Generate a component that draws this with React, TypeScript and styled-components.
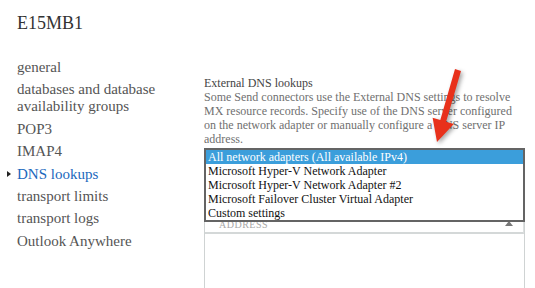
import React from "react";
import styled, { createGlobalStyle } from "styled-components";

const Global = createGlobalStyle`
  html, body { margin: 0; padding: 0; background: #fff; }
  body { font-family: "Liberation Serif", "Times New Roman", serif; }
`;

const Page = styled.div`
  position: relative;
  width: 535px;
  height: 288px;
  overflow: hidden;
  background: #fff;
`;

const Title = styled.h1`
  margin: 0;
  padding: 12px 0 0 17px;
  font-size: 18px;
  line-height: 22px;
  font-weight: normal;
  color: #333;
`;

const Body = styled.div`
  display: grid;
  grid-template-columns: 204px 1fr;
`;

const Nav = styled.ul`
  list-style: none;
  margin: 25px 0 0;
  padding: 0;
  display: flex;
  flex-direction: column;
  gap: 5.4px;
`;

const NavItem = styled.li<{ $active?: boolean }>`
  display: flex;
  font-size: 15px;
  line-height: 17px;
  color: ${(p) => (p.$active ? "#1a68bd" : "#555")};
`;

const NavLabel = styled.span`
  max-width: 150px;
`;

const Marker = styled.span<{ $show?: boolean }>`
  flex: 0 0 17px;
  display: flex;
  align-items: center;
  padding-left: 7px;
  box-sizing: border-box;
  &::before {
    content: "";
    display: ${(p) => (p.$show ? "block" : "none")};
    border-left: 4px solid #222;
    border-top: 3.5px solid transparent;
    border-bottom: 3.5px solid transparent;
  }
`;

const Panel = styled.div`
  margin-top: 42px;
  width: 321px;
  display: flex;
  flex-direction: column;
`;

const Heading = styled.div`
  font-size: 12px;
  line-height: 14px;
  color: #444;
`;

const Description = styled.p`
  margin: 0;
  font-size: 12px;
  line-height: 14px;
  color: #707070;
`;

const Field = styled.div`
  position: relative;
  margin-top: 2px;
  height: 62px;
`;

const Options = styled.ul`
  position: absolute;
  z-index: 2;
  left: 0;
  top: 0;
  width: 321px;
  box-sizing: border-box;
  margin: 0;
  padding: 0;
  list-style: none;
  background: #fff;
  border: 2px solid #646464;
`;

const Option = styled.li<{ $selected?: boolean }>`
  height: 14px;
  padding-left: 2px;
  font-size: 12px;
  line-height: 14px;
  white-space: nowrap;
  color: ${(p) => (p.$selected ? "#fff" : "#111")};
  background: ${(p) => (p.$selected ? "#3b9edb" : "transparent")};
`;

const List = styled.div`
  border: 1px solid #cfd3d3;
  border-top: none;
  height: 120px;
`;

const ListHeader = styled.div`
  display: flex;
  align-items: flex-end;
  justify-content: space-between;
  height: 20px;
  padding: 0 10px 2px 14px;
  border-bottom: 2px solid #d4d8d8;
  border-right: 1px solid #dde0e0;
  font-size: 10px;
  line-height: 10px;
  letter-spacing: 0.5px;
  color: #a8a8a8;
`;

const SortIcon = styled.span`
  width: 0;
  height: 0;
  margin-bottom: 4px;
  border-bottom: 5px solid #777;
  border-left: 4px solid transparent;
  border-right: 4px solid transparent;
`;

const Annotation = styled.svg`
  position: absolute;
  left: 0;
  top: 0;
  pointer-events: none;
  z-index: 5;
  filter: drop-shadow(2px 2px 2px rgba(0, 0, 0, 0.35));
`;

const navItems = [
  "general",
  "databases and database availability groups",
  "POP3",
  "IMAP4",
  "DNS lookups",
  "transport limits",
  "transport logs",
  "Outlook Anywhere",
];

const options = [
  "All network adapters (All available IPv4)",
  "Microsoft Hyper-V Network Adapter",
  "Microsoft Hyper-V Network Adapter #2",
  "Microsoft Failover Cluster Virtual Adapter",
  "Custom settings",
];

export default function App() {
  return (
    <Page>
      <Global />
      <Title>E15MB1</Title>
      <Body>
        <Nav>
          {navItems.map((n) => (
            <NavItem key={n} $active={n === "DNS lookups"}>
              <Marker $show={n === "DNS lookups"} />
              <NavLabel>{n}</NavLabel>
            </NavItem>
          ))}
        </Nav>
        <Panel>
          <Heading>External DNS lookups</Heading>
          <Description>
            Some Send connectors use the External DNS settings to resolve MX resource records. Specify use of the DNS
            server configured on the network adapter or manually configure a DNS server IP address.
          </Description>
          <Field>
            <Options>
              {options.map((o, i) => (
                <Option key={o} $selected={i === 0}>
                  {o}
                </Option>
              ))}
            </Options>
          </Field>
          <List>
            <ListHeader>
              <span>ADDRESS</span>
              <SortIcon />
            </ListHeader>
          </List>
        </Panel>
      </Body>
      <Annotation width="535" height="288" viewBox="0 0 535 288">
        <polygon
          points="461,71 455,69 440.3,120.1 432.6,117.8 437,142 453.8,124 446.1,121.7"
          fill="#e8311b"
        />
      </Annotation>
    </Page>
  );
}
